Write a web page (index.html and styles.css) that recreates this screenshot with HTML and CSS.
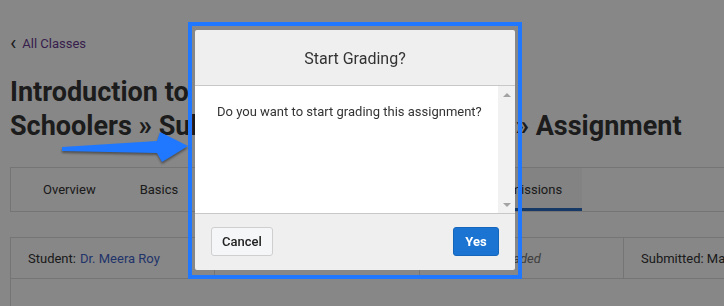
FILE: index.html
```html
<!DOCTYPE html>
<html>
<head>
<meta charset="utf-8">
<link rel="stylesheet" href="styles.css">
</head>
<body>
<div class="page">
  <a class="back" href="#"><span class="chev">&lsaquo;</span> All Classes</a>
  <h1 class="title">Introduction to Coding for Home<br>Schoolers » Subject Computational Logic » Assignment</h1>
  <div class="tabs">
    <div class="tab">Overview</div>
    <div class="tab">Basics</div>
    <div class="tab">Content</div>
    <div class="tab">Rubrics</div>
    <div class="tab">Grading</div>
    <div class="tab active">Submissions</div>
  </div>
  <div class="table">
    <div class="row">
      <div class="cell">Student: <a class="name" href="#">Dr. Meera Roy</a></div>
      <div class="cell">Assignment: Loops</div>
      <div class="cell">Grade: <em class="muted">Not graded</em></div>
      <div class="cell">Submitted: Mar 12, 2024</div>
    </div>
    <div class="tbody"></div>
  </div>
</div>
<div class="backdrop"></div>
<div class="highlight"></div>
<svg class="arrow" width="140" height="45" viewBox="55 125 140 45">
  <polygon points="62,147 157,141 160,132 188,146 162,162 157,153 62,151" fill="#1f78ff"/>
</svg>
<div class="modal">
  <div class="modal-head">Start Grading?</div>
  <div class="modal-body">
    <p class="msg">Do you want to start grading this assignment?</p>
    <div class="scrollbar">
      <span class="tri up"></span>
      <span class="tri down"></span>
    </div>
  </div>
  <div class="modal-foot">
    <button class="btn cancel">Cancel</button>
    <button class="btn yes">Yes</button>
  </div>
</div>
</body>
</html>
```
FILE: styles.css
```css
html, body {
  margin: 0;
  padding: 0;
  width: 724px;
  height: 306px;
  overflow: hidden;
  background: #fff;
  font-family: Roboto, "Liberation Sans", sans-serif;
  color: #333;
}
.page {
  width: 900px;
  padding: 35px 0 0 10px;
}
.back {
  display: flex;
  align-items: center;
  gap: 6px;
  font-size: 13px;
  line-height: 18px;
  color: #6a3b8f;
  text-decoration: none;
}
.chev {
  font-size: 21px;
  line-height: 18px;
  color: #333;
  margin-top: -3px;
}
.title {
  margin: 22px 0 0 0;
  font-size: 27px;
  line-height: 34px;
  font-weight: 700;
  color: #363636;
  white-space: nowrap;
}
.tabs {
  margin-top: 24px;
  display: flex;
  height: 43px;
  border: 1px solid #ddd;
  border-right: none;
  padding-left: 10px;
}
.tab {
  padding: 0 22px;
  display: flex;
  align-items: center;
  font-size: 13px;
  color: #333;
}
.tab.active {
  background: #f7f7f7;
  border-bottom: 3px solid #2a6fbf;
  padding: 3px 20px 0 21px;
}
.table {
  margin-top: 25px;
  border: 1px solid #ddd;
  border-right: none;
}
.row {
  display: grid;
  grid-template-columns: 204px 205px 204px 250px;
  height: 40px;
  border-bottom: 1px solid #ddd;
}
.cell {
  display: flex;
  align-items: center;
  padding-left: 17px;
  font-size: 13px;
  color: #333;
  border-right: 1px solid #ddd;
  white-space: nowrap;
}
.name {
  color: #3f63c9;
  text-decoration: none;
  margin-left: 4px;
}
.muted {
  color: #777;
  margin-left: 4px;
}
.tbody {
  height: 60px;
}
.backdrop {
  position: fixed;
  inset: 0;
  background: rgba(0, 0, 0, 0.47);
}
.highlight {
  position: absolute;
  left: 188px;
  top: 22px;
  width: 326px;
  height: 249px;
  border: 4px solid #1f78ff;
}
.arrow {
  position: absolute;
  left: 55px;
  top: 125px;
  filter: drop-shadow(0 2px 1px rgba(0,0,0,0.4));
}
.modal {
  position: absolute;
  left: 195px;
  top: 30px;
  width: 320px;
  height: 240px;
  background: #efefef;
  border-radius: 2px;
  display: flex;
  flex-direction: column;
  overflow: hidden;
}
.modal-head {
  height: 56px;
  box-sizing: border-box;
  border-bottom: 1px solid #c8c8c8;
  display: flex;
  align-items: center;
  justify-content: center;
  font-size: 16px;
  color: #333;
  padding-top: 1px;
}
.modal-body {
  height: 127px;
  background: #fff;
  display: flex;
  border-bottom: 1px solid #c8c8c8;
}
.msg {
  flex: 1;
  margin: 0;
  padding: 17px 0 0 22px;
  font-size: 13px;
  line-height: 17px;
  color: #333;
}
.scrollbar {
  width: 17px;
  background: #f1f1f1;
  display: flex;
  flex-direction: column;
  justify-content: space-between;
  align-items: center;
  padding: 7px 0 6px;
}
.tri {
  width: 0;
  height: 0;
  border-left: 4px solid transparent;
  border-right: 4px solid transparent;
}
.tri.up { border-bottom: 4px solid #a3a3a3; }
.tri.down { border-top: 4px solid #a3a3a3; }
.modal-foot {
  flex: 1;
  display: flex;
  justify-content: space-between;
  align-items: flex-start;
  padding: 13px 16px 0;
}
.btn {
  height: 29px;
  border-radius: 3px;
  font-family: Roboto, "Liberation Sans", sans-serif;
  font-size: 13px;
  padding: 0;
  cursor: pointer;
}
.cancel {
  width: 62px;
  background: #f5f6f8;
  border: 1px solid #cfcfcf;
  color: #222;
  font-weight: 500;
}
.yes {
  width: 46px;
  background: #1b74d2;
  border: 1px solid #1566bb;
  color: #fff;
  font-weight: 700;
}
```
